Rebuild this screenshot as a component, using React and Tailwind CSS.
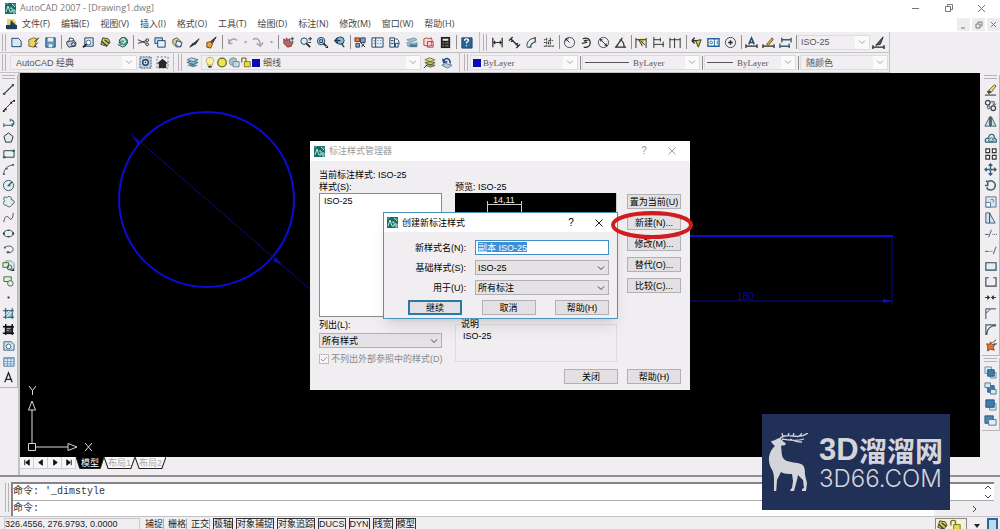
import React, { useState } from "react";

const BLACK = "#2a2a2a";
const TEAL = "#35606e";
const NAVY = "#1d3f63";

// all toolbar glyphs share a 14x14 grid
const icons = {
  new: <path d="M2 2.5h7l3 3v6H2z" fill="#d5e9f5" stroke={NAVY} />,
  open: (
    <>
      <path d="M2 4l5-2 4 1-3 9-6-1z" fill="#e8d36a" stroke="#77682a" />
      <path d="M8 6l5-4M12 7l-4 4 3 1" stroke={BLACK} />
    </>
  ),
  save: (
    <>
      <path d="M2 2h10v10H2z" fill="#5d9bbf" stroke={NAVY} />
      <path d="M4 2h6v4H4zM5 9h4v3H5z" fill="#e4eef5" />
    </>
  ),
  plot: (
    <>
      <path d="M4 6l1-4 4 1v3" fill="#fff" stroke={NAVY} />
      <path d="M2 6l8-1 2 3-1 3-7 1-2-3z" fill="#c6c9d4" stroke="#33334e" />
      <circle cx="9" cy="9" r="2" stroke={NAVY} />
    </>
  ),
  preview: (
    <>
      <path d="M3 2h9v9H3z" fill="#dbe9f4" stroke={NAVY} />
      <circle cx="7" cy="7" r="2.5" fill="#fff" stroke="#45688a" />
      <path d="M5 9l-4 3" stroke={BLACK} strokeWidth="2" />
    </>
  ),
  publish: (
    <>
      <path d="M4 2l6 1 2 4-4 4-6-2z" fill="#e2cf55" stroke="#4b4320" />
      <path d="M3 6l6 5M6 4l5 4" stroke={NAVY} strokeWidth="1.5" />
    </>
  ),
  globe: (
    <>
      <circle cx="8" cy="6" r="4.5" fill="#4d9c92" stroke={NAVY} />
      <path d="M5 5l3-2 2 3-3 2M1 9l7 2 3-1" stroke="#d7ebc0" strokeWidth="1.5" />
      <path d="M2 9l5 3 4-2" stroke={NAVY} />
    </>
  ),
  cut: (
    <>
      <path d="M1 4l9 4M1 8l9-3" stroke={BLACK} />
      <circle cx="11" cy="4.500" r="1.500" stroke={BLACK} />
      <circle cx="11" cy="9" r="1.500" stroke={BLACK} />
    </>
  ),
  copy: (
    <>
      <path d="M1 2h8v6H1z" fill="#bfdcec" stroke={NAVY} />
      <path d="M4 5h8v7H4z" fill="#e2f0f8" stroke={NAVY} />
    </>
  ),
  paste: (
    <>
      <path d="M2 4l4-2 4 3 1 6-5 1-4-4z" fill="#d6d69c" stroke="#5b5b3a" />
      <path d="M6 5l6 2-2 5-5-2z" fill="#e8f1f4" stroke={NAVY} />
    </>
  ),
  brush: <path d="M2 12l3-4 2 1zM6 8l6-5-4 6z" fill={BLACK} stroke={BLACK} />,
  match: (
    <>
      <path d="M6 6l6-5-4 7z" fill="#b6322a" stroke={BLACK} />
      <path d="M2 7l4-1 2 3-2 4-4-1z" fill="#e2a648" stroke="#6b3b20" />
    </>
  ),
  undo: <path d="M3 8c1-5 7-6 9-3M3 3v5h4" stroke="#a5a3a8" strokeWidth="1.500" />,
  redo: <path d="M2 4c4-3 8 0 8 6M6 8l4 3 3-4" stroke="#a5a3a8" strokeWidth="1.500" />,
  pan: (
    <>
      <path d="M2 3l2 2 1-3 1 3 2-2 1 4 3-1-2 5-4 1-4-4z" fill="#b46a60" stroke="#7b3c3c" />
      <path d="M11 1v4M9 3h4" stroke={NAVY} />
    </>
  ),
  zoomRt: (
    <>
      <circle cx="5.500" cy="5.500" r="3.500" fill="#dcecf4" stroke={NAVY} />
      <path d="M8 8l4 4" stroke={BLACK} strokeWidth="2" />
      <path d="M10 3h4M12 1v4M10 7h3" stroke={BLACK} />
    </>
  ),
  zoomWin: (
    <>
      <circle cx="5.500" cy="5.500" r="4" fill="#b7d5e4" stroke={NAVY} />
      <path d="M4 4h3v3H4z" stroke={NAVY} />
      <path d="M8 8l3 3" stroke={BLACK} strokeWidth="2" />
      <path d="M13 10v3h-3z" fill={BLACK} />
    </>
  ),
  zoomPrev: (
    <>
      <circle cx="8" cy="5" r="4" fill="#8fb9d0" stroke={NAVY} />
      <path d="M2 5h6M5 2L2 5l3 3M9 8l3 4" stroke={NAVY} strokeWidth="1.500" />
    </>
  ),
  props: (
    <>
      <path d="M1 2h5v4H1z" fill="#d8873b" stroke="#7f3030" />
      <path d="M7 2h5v5H7zM2 8h4v4H2z" fill="#8b9bc9" stroke="#38406c" />
      <path d="M7 7l5 5M8 12l3-4" stroke={BLACK} />
    </>
  ),
  center: (
    <>
      <path d="M1 2h12v10H1z" fill="#eaf1f6" stroke={NAVY} />
      <path d="M5 2v10M3 5h1M7 5h1M10 5h1M3 8h1M7 8h1M10 8h1" stroke={NAVY} />
    </>
  ),
  palettes: (
    <>
      <path d="M2 2h5v10H2z" fill="#e4edf5" stroke={NAVY} />
      <path d="M3 5h3M3 8h3M8 3c3 0 4 2 4 6M8 8h3v4H8z" stroke={NAVY} />
    </>
  ),
  sheet: (
    <>
      <path d="M2 4l8-2 3 2-7 3zM2 7l7 1 4-1v4H3z" fill="#9bc1cf" stroke="#7b9bb0" />
      <path d="M5 9h8v3H5z" fill="#4f7791" />
    </>
  ),
  markup: (
    <>
      <path d="M2 3l3-1 2 1 3-1 1 3-1 3 1 2-4 1-5-1z" fill="#f6d8d8" stroke="#c0393f" />
      <path d="M6 6h6v6H6z" stroke="#b33" />
    </>
  ),
  calc: (
    <>
      <path d="M2 1h10v12H2z" fill="#222" />
      <path d="M4 3h6v2H4zM4 7h1v1H4zM7 7h1v1H7zM9 7h1v1H9zM4 10h1v1H4zM7 10h1v1H7zM9 10h1v1H9z" fill="#f0e9e6" />
    </>
  ),
  help: (
    <>
      <path d="M2 2h11v11H2z" fill="#2b6595" stroke={NAVY} />
      <path d="M5 5c0-3 5-2 4 0-1 1-2 1-2 3M7 10v1" stroke="#fff" strokeWidth="1.500" />
    </>
  ),
  dimLinear: <path d="M2 2v10M12 2v10M2 7h10M4 5v4M10 5v4" stroke={BLACK} strokeWidth="1.300" />,
  dimAligned: <path d="M1 5l4-4M9 13l4-4M3 3l8 8M3 6l3-1M8 9l3-1" stroke={BLACK} strokeWidth="1.400" />,
  dimArc: (
    <>
      <path d="M2 11c0-5 3-8 9-9" stroke={BLACK} />
      <path d="M6 12c0-3 2-5 6-6M2 12h5M11 1v6" stroke={TEAL} strokeWidth="1.500" />
    </>
  ),
  dimOrd: <path d="M5 2v9M2 11h11M7 9V5h5M9 2v9M2 4h2M2 7h2" stroke={BLACK} strokeDasharray="3 1" />,
  dimRadius: (
    <>
      <circle cx="7" cy="7" r="5.500" stroke="#444" />
      <path d="M7 7L3 3M3 3v3M3 3h3" stroke={BLACK} />
    </>
  ),
  dimJog: <path d="M3 3c4-2 8 0 8 4s-3 6-7 5M2 8l5-1-2-2 5-1" stroke={BLACK} strokeWidth="1.300" />,
  dimDia: (
    <>
      <circle cx="7" cy="7" r="5.500" stroke="#444" />
      <path d="M3 3l8 8M4 6V4h2M10 8v2H8" stroke={BLACK} />
    </>
  ),
  dimAngle: <path d="M1 12h12M2 12l7-10M6 4c4 1 5 4 5 8" stroke={BLACK} strokeWidth="1.300" />,
  quickDim: (
    <>
      <path d="M3 3h8l-3 8z" fill="#d8cf3f" />
      <path d="M1 2v11M12 2v11M1 4h11M4 4l4 7M6 5l5 5" stroke={BLACK} />
    </>
  ),
  baseline: <path d="M2 1v12M2 4h7M2 9h11M9 2v4M12 6v6" stroke={BLACK} />,
  continueDim: <path d="M1 2v11M6 2v11M12 2v11M1 4h11" stroke={BLACK} />,
  leader: (
    <>
      <path d="M2 5h6M2 5l3-3M2 5l3 3" stroke={BLACK} strokeWidth="1.500" />
      <path d="M6 5l6-1-3 8z" fill="#d2c92f" stroke={BLACK} />
    </>
  ),
  tolerance: (
    <>
      <path d="M1 3h12v8H1z" fill="#fff" stroke="#27639b" strokeWidth="1.500" />
      <path d="M8 3v8M11 5v4" stroke="#27639b" />
      <circle cx="4.500" cy="7" r="1.500" stroke="#27639b" />
    </>
  ),
  centerMark: (
    <>
      <circle cx="7" cy="7" r="5.500" stroke="#444" />
      <path d="M7 4.500v5M4.500 7h5" stroke={BLACK} strokeWidth="1.500" />
    </>
  ),
  dimEdit: (
    <>
      <path d="M1 9v4M13 9v4M1 11h12" stroke={BLACK} strokeWidth="1.300" />
      <path d="M4 9l3-7 3 7M5 7h4" stroke="#1f4d6e" strokeWidth="1.600" />
    </>
  ),
  dimTedit: (
    <>
      <path d="M1 9v4M13 9v4M1 11h12" stroke={BLACK} strokeWidth="1.300" />
      <path d="M5 9l6-7 1 2-5 6z" fill="#dfb83a" stroke="#6f5417" />
    </>
  ),
  dimUpdate: <path d="M3 2v5M13 2v5M3 4h10M1 8v5M11 8v5M1 11h10" stroke={TEAL} strokeWidth="1.500" />,
  dimStyle: (
    <>
      <path d="M1 10v4M13 10v4M1 12h12" stroke={BLACK} strokeWidth="1.500" />
      <path d="M4 10l8-9-3 8z" fill="#4c5c5c" stroke={BLACK} />
    </>
  ),
  gear: (
    <>
      <path d="M1 1h12v12H1z" fill="#bfd3df" stroke="#3e5568" strokeDasharray="2 1" />
      <circle cx="7" cy="7" r="3" fill="#fff" stroke={NAVY} strokeWidth="1.500" />
      <circle cx="7" cy="7" r="1" fill={NAVY} />
    </>
  ),
  home: (
    <>
      <path d="M1 1h12v12H1z" stroke="#666" strokeDasharray="2 2" />
      <path d="M1 8l6-5 6 5h-2v5H3V8z" fill="#2a2a2a" />
    </>
  ),
  layers: (
    <>
      <path d="M1 10l5-2 7 2-5 2z" fill="#5b8ba5" />
      <path d="M1 7l5-2 7 2-5 2z" fill="#8fb8ca" stroke="#3a6580" />
      <path d="M1 4l5-2 7 2-5 2z" fill="#c5dde7" stroke="#4c7890" />
    </>
  ),
  bulb: (
    <>
      <path d="M4 8c-3-3-1-7 3-7s6 4 3 7v2H4z" fill="#f8f2a0" stroke="#a8a24c" />
      <path d="M5 12h4" stroke="#333" strokeWidth="2" />
    </>
  ),
  sun: <circle cx="7" cy="7" r="5" fill="#efe44c" stroke="#6f6b25" strokeWidth="1.500" />,
  freeze: (
    <>
      <circle cx="6" cy="6" r="4.500" fill="#a9c4cf" stroke="#6f8a95" />
      <path d="M6 6h7v6H6z" fill="#c9dde6" stroke="#60808f" />
    </>
  ),
  lock: (
    <>
      <path d="M5 6h7v6H5z" fill="#e6dc4a" stroke="#77701f" />
      <path d="M2 7V3c0-2 5-2 5 0v3" stroke="#77701f" strokeWidth="1.500" />
    </>
  ),
  layerMake: (
    <>
      <path d="M2 4l5-2 6 2-5 2z" fill="#d9dd9a" stroke="#74783b" />
      <path d="M2 7l5-1 6 1-5 3zM3 10l4-1 6 1-5 2z" fill="#b9c06c" stroke="#585c2e" />
      <path d="M1 13l3-3" stroke={BLACK} />
    </>
  ),
  layerPrev: (
    <>
      <path d="M2 10l4-2 7 2-5 3z" fill="#b9cfdb" stroke="#5a7d93" />
      <path d="M4 6c2-5 7-4 7 2M3 3l1 4 4-1" stroke="#1d4b8c" strokeWidth="1.700" />
    </>
  ),
  line: (
    <>
      <path d="M2.500 11.500l9-9" stroke="#333" strokeWidth="1.300" />
      <path d="M1 10.500h2.500V13H1zM10.500 1H13v2.500h-2.500z" fill={TEAL} />
    </>
  ),
  xline: (
    <>
      <path d="M1 13L13 1" stroke="#333" />
      <path d="M3 10h2v2H3zM9 3h2v2H9zM1 12h2v2H1zM12 1h2v2h-2z" fill="#222" />
    </>
  ),
  pline: <path d="M2 11h9M2 9v4M5 11h6c3-1 2-5-1-6M11 9v4M9 4v3" stroke={TEAL} strokeWidth="1.200" />,
  polygon: <path d="M7 2l5 4-2 6H4L2 6z" fill="#dcecf0" stroke={BLACK} />,
  rect: (
    <>
      <path d="M2 4h11v7H2z" fill="#e9f1f5" stroke="#333" />
      <path d="M1 10h3v2H1zM11 3h3v2h-3z" fill={TEAL} />
    </>
  ),
  arc: (
    <>
      <path d="M2 12c0-6 4-9 10-10" stroke="#555" />
      <path d="M1 11h2v2H1zM4 5h2v2H4zM11 1h2v2h-2z" fill={TEAL} />
    </>
  ),
  circle: (
    <>
      <circle cx="7" cy="7" r="5.500" fill="#e0eff3" stroke="#3b4d55" />
      <path d="M7 7l4-4M6 7h3" stroke={TEAL} strokeWidth="1.500" />
    </>
  ),
  cloud: (
    <path d="M5 3c2-3 6-1 5 2 4 0 4 5 1 5-1 4-6 3-6 1-4 1-4-4-2-5-3-3 0-5 2-3z" fill="#deedf0" stroke="#455" />
  ),
  spline: <path d="M2 12c1-9 5-6 6-4s4 1 4-6" stroke="#444" />,
  ellipse: (
    <>
      <ellipse cx="7" cy="7" rx="5" ry="3.500" fill="#e3f1f4" stroke="#456" />
      <path d="M1 6h2v2H1zM11 6h2v2h-2zM6 3h2v1H6zM6 10h2v1H6z" fill={BLACK} />
    </>
  ),
  ellipseArc: (
    <>
      <path d="M3 5c3-3 9-2 9 2 0 3-4 4-6 3" stroke="#456" />
      <path d="M2 4h2v2H2zM5 9h3v2H5z" fill={TEAL} />
    </>
  ),
  insert: (
    <>
      <path d="M4 2h6l3 3v6H6z" fill="#dae5ee" stroke="#8196a4" />
      <path d="M1 4h6v5H1zM8 12h5" fill="#dff0d4" stroke="#3d6a36" />
      <circle cx="8" cy="9" r="2.500" stroke="#3d6a36" />
      <path d="M13 10v3h-3z" fill={BLACK} />
    </>
  ),
  block: (
    <>
      <path d="M2 2h8v5H2z" fill="#dff0d4" stroke="#3d6a36" />
      <circle cx="9" cy="9" r="3" fill="#dfeee4" stroke="#3d6a36" />
    </>
  ),
  point: <path d="M6 6h2v2H6z" fill={BLACK} />,
  hatch: (
    <>
      <path d="M3 3h9v9H3z" fill="#9cc9da" />
      <path d="M1 4h12M1 11h12M4 1v12M11 1v12" stroke="#28495d" />
      <path d="M4 8l4-4M5 11l6-6" stroke="#fff" />
    </>
  ),
  gradient: (
    <>
      <path d="M3 3h9v9H3z" fill="#3b4650" />
      <path d="M1 4h12M1 11h12M4 1v12M11 1v12" stroke="#111" strokeWidth="1.500" />
      <path d="M5 6h4M5 8h2" stroke="#a9b7c2" />
    </>
  ),
  region: (
    <>
      <path d="M2 3h8l3 3v6H2z" fill="#cfe3ee" stroke="#3b6580" />
      <circle cx="7" cy="8" r="2.500" fill="#fff" stroke="#3b6580" />
    </>
  ),
  table: (
    <>
      <path d="M2 3h11v9H2z" fill="#e8f2f9" stroke="#3f6f9d" />
      <path d="M2 4h11M2 7h11M2 9.500h11M6 4v8M9.500 4v8" stroke="#6e9cc4" />
    </>
  ),
  mtext: <path d="M3 12l4-10 4 10M4.500 9h5" stroke="#222" strokeWidth="1.400" />,
  erase: (
    <>
      <path d="M5 8l6-6 2 1-5 7z" fill="#e8d98a" stroke="#6e6130" />
      <path d="M3 9l3-1 2 2-3 2z" fill="#444" />
      <path d="M1 13h12" stroke="#222" />
    </>
  ),
  copyObj: (
    <>
      <circle cx="4" cy="4" r="2.500" stroke="#345" strokeWidth="1.300" />
      <circle cx="5" cy="9" r="1.500" stroke="#345" />
      <circle cx="10" cy="10" r="2.500" stroke="#345" strokeWidth="1.300" />
      <path d="M7 3h4v3M9 5l2 2 2-2" stroke="#345" />
    </>
  ),
  mirror: (
    <>
      <path d="M6 2v10H1zM8 2v10h5z" fill="#c8dfe4" stroke="#456" />
      <path d="M7 1v12" stroke="#456" />
    </>
  ),
  offset: (
    <>
      <path d="M2 12c-2-3 1-5 3-4 0-6 7-6 6 0 2 0 3 2 2 4z" fill="#d6e9ec" stroke={TEAL} strokeWidth="1.300" />
      <path d="M5 11c-1-2 2-2 2-3s3-1 2 1c2 0 2 2 1 2z" stroke={TEAL} />
    </>
  ),
  array: <path d="M2 2h4v4H2zM9 2h4v4H9zM2 9h4v4H2zM9 9h4v4H9z" fill="#fff" stroke="#333" strokeWidth="1.200" />,
  move: <path d="M7 1v12M1 7h12M5 3l2-2 2 2M5 11l2 2 2-2M3 5L1 7l2 2M11 5l2 2-2 2" stroke="#3b6276" strokeWidth="1.500" />,
  rotate: <path d="M4 3c4-3 9 1 8 5-1 5-8 5-9 1M2 2l2 1v4H1" stroke="#3b6276" strokeWidth="1.700" />,
  scale: (
    <>
      <path d="M2 2h11v11H2z" fill="#d8e5f2" stroke="#59758f" />
      <path d="M2 8h5v5H2zM7 5h3v3" fill="#f6f9fc" stroke="#59758f" />
    </>
  ),
  stretch: <path d="M2 2h4v11H2zM6 2l6 11H6z" fill="#d4e5f0" stroke="#3c5a70" />,
  trim: <path d="M1 8h4M5 11l3-8M9 8h1M11 8h1M13 8h1" stroke="#456" />,
  extend: <path d="M1 9h4M6 9h1M8 9h1M10 12l3-8" stroke="#456" />,
  breakAt: <path d="M2 4h11v8H2z" fill="#e4edf3" stroke="#345" strokeWidth="1.200" />,
  breakObj: <path d="M5 3H2v9h11V3h-3" fill="none" stroke="#345" strokeWidth="1.200" />,
  join: <path d="M1 7h5M8 7h5M4 5l2 2-2 2zM10 5L8 7l2 2z" fill="#333" stroke="#333" />,
  chamfer: <path d="M2 13V7l5-5h6M2 7V2h5" stroke="#345" />,
  fillet: <path d="M3 13C3 6 7 3 13 3M2 13V2h11" stroke={TEAL} strokeWidth="1.200" />,
  explode: (
    <>
      <path d="M3 5l3 1 1-3 2 3 3-1-2 4 1 3-4-1-3 2v-4z" fill="#d9773a" stroke="#8c3f24" />
      <path d="M9 4l4-3M11 6l3-1" stroke="#444" />
    </>
  ),
  front: (
    <>
      <path d="M1 1h7v7H1zM7 7h6v6H7z" fill="#d7e7f2" stroke="#6d8da6" />
      <path d="M4 4h7v7H4z" fill="#3f7cae" stroke="#24557e" />
    </>
  ),
  back: (
    <>
      <path d="M4 4h7v7H4z" fill="#3f7cae" stroke="#24557e" />
      <path d="M1 1h6v5H1zM7 8h6v5H7z" fill="#d7e7f2" stroke="#4f738e" />
    </>
  ),
  above: (
    <>
      <path d="M6 6h7v7H6z" fill="#d7e7f2" stroke="#6d8da6" />
      <path d="M2 2h9v8H2z" fill="#3f7cae" stroke="#24557e" />
    </>
  ),
  under: (
    <>
      <path d="M1 2h9v8H1z" fill="#4f86a9" stroke="#24557e" />
      <path d="M5 6h8v6H5z" fill="#e1f0f6" stroke="#4f738e" />
    </>
  ),
};

const drawTools = [
  "line", "xline", "pline", "polygon", "rect", "arc", "circle", "cloud", "spline", "ellipse",
  "ellipseArc", "insert", "block", "point", "hatch", "gradient", "region", "table", "mtext",
];
const modifyTools = [
  "erase", "copyObj", "mirror", "offset", "array", "move", "rotate", "scale", "stretch",
  "trim", "extend", "breakAt", "breakObj", "join", "chamfer", "fillet", "explode",
];
const orderTools = ["front", "back", "above", "under"];

const menus = [
  "文件(F)", "编辑(E)", "视图(V)", "插入(I)", "格式(O)", "工具(T)",
  "绘图(D)", "标注(N)", "修改(M)", "窗口(W)", "帮助(H)",
];

function Icon({ name }) {
  return (
    <svg viewBox="0 0 14 14" className="h-[13px] w-[13px]" fill="none">
      {icons[name]}
    </svg>
  );
}

function Tool({ name }) {
  return (
    <button type="button" aria-label={name} className="flex h-4 w-[17px] shrink-0 items-center justify-center">
      <Icon name={name} />
    </button>
  );
}

function Tools({ names }) {
  return (
    <div className="flex shrink-0">
      {names.map((n) => (
        <Tool key={n} name={n} />
      ))}
    </div>
  );
}

function Sep() {
  return (
    <div className="flex w-1 shrink-0 justify-center">
      <div className="h-[14px] w-px bg-[#8f8d90]" />
    </div>
  );
}

function Grip() {
  return (
    <div className="mr-px flex h-[17px] w-[7px] shrink-0 gap-[2px] pl-[2px]">
      <div className="w-px bg-[#b5b3b6]" />
      <div className="w-px bg-[#b5b3b6]" />
    </div>
  );
}

function Chevron({ className }) {
  return (
    <svg viewBox="0 0 8 5" className={"pointer-events-none absolute h-[5px] w-2 " + className} fill="none">
      <path d="M1 .5l3 3 3-3" stroke="currentColor" />
    </svg>
  );
}

function BarSelect({ label, value, className, textClass = "pl-1", children }) {
  return (
    <div className={"relative flex h-[15px] shrink-0 items-center border border-[#dddbde] bg-[#f1eff2] " + className}>
      {children}
      <select aria-label={label} className={"h-full min-w-0 flex-1 appearance-none text-[9px] leading-3 text-[#555] outline-none " + textClass}>
        <option>{value}</option>
      </select>
      <div className="pointer-events-none absolute right-0 top-0 h-full w-[14px] bg-[#fbfafb]" />
      <Chevron className="right-[3px] top-1 text-[#a5a3a8]" />
    </div>
  );
}

function AppIcon() {
  return (
    <svg viewBox="0 0 11 11" className="h-[11px] w-[11px] shrink-0" fill="none">
      <path d="M0 0h11v11H0z" fill="#176e66" />
      <path d="M1 9l2-6 2 6M5 5h2v4H5M8 9V7h2v3H8M7 1l3 3" stroke="#bfe5df" />
      <path d="M0 2l3-2M8 2h3" stroke="#5fb3a8" />
    </svg>
  );
}

function DialogButton({ children, className = "" }) {
  return (
    <button
      type="button"
      className={"h-[15px] shrink-0 whitespace-nowrap border bg-[#e2e0e2] text-[9px] leading-3 text-black " + (className || "w-[54px] border-[#b2b0b3]")}
    >
      {children}
    </button>
  );
}

function DialogSelect({ id, value, className = "" }) {
  return (
    <div className={"relative h-[15px] border border-[#b2b0b3] bg-[#e4e2e4] " + className}>
      <select id={id} className="block h-full w-full appearance-none pl-[2px] text-[9px] leading-3 text-black outline-none">
        <option>{value}</option>
      </select>
      <Chevron className="right-[3px] top-[5px] text-[#444]" />
    </div>
  );
}

function Toolbars() {
  return (
    <div className="flex h-[41px] shrink-0 flex-col overflow-hidden bg-[#f0eef1]">
      <div className="flex h-[21px] w-[890px] items-center border-b border-r border-[#c3c1c4]">
        <Grip />
        <Tools names={["new", "open", "save"]} />
        <Sep />
        <Tools names={["plot", "preview", "publish", "globe"]} />
        <Sep />
        <Tools names={["cut", "copy", "paste", "brush", "match"]} />
        <Sep />
        <Tool name="undo" />
        <span className="w-2 text-center text-[6px] text-[#aaa]">▾</span>
        <Tool name="redo" />
        <span className="w-[10px] text-center text-[6px] text-[#aaa]">▾</span>
        <Sep />
        <Tools names={["pan", "zoomRt", "zoomWin", "zoomPrev"]} />
        <Sep />
        <Tools names={["props", "center", "palettes", "sheet", "markup", "calc"]} />
        <Sep />
        <Tool name="help" />
        <div className="ml-1 mr-px h-full w-px bg-[#c3c1c4]" />
        <Grip />
        <Tools names={["dimLinear", "dimAligned", "dimArc", "dimOrd"]} />
        <Sep />
        <Tools names={["dimRadius", "dimJog", "dimDia", "dimAngle"]} />
        <Sep />
        <Tools names={["quickDim", "baseline", "continueDim"]} />
        <Sep />
        <Tools names={["leader", "tolerance", "centerMark"]} />
        <Sep />
        <Tools names={["dimEdit", "dimTedit", "dimUpdate"]} />
        <Sep />
        <BarSelect label="标注样式" value="ISO-25" className="w-[72px]" textClass="pl-[2px]" />
        <Tool name="dimStyle" />
      </div>
      <div className="flex h-5 w-[890px] items-center border-b border-r border-[#c3c1c4]">
        <Grip />
        <BarSelect label="工作空间" value="AutoCAD 经典" className="ml-[2px] w-[127px]" textClass="pl-[5px]" />
        <Tools names={["gear", "home"]} />
        <div className="ml-[2px] mr-[2px] h-full w-px bg-[#c3c1c4]" />
        <Grip />
        <Tool name="layers" />
        <BarSelect label="图层" value="细线" className="w-[220px]" textClass="pl-[3px]">
          <div className="ml-[2px] flex">
            {["bulb", "sun", "freeze", "lock"].map((n) => (
              <span key={n} className="flex w-3">
                <Icon name={n} />
              </span>
            ))}
          </div>
          <span className="h-2 w-2 shrink-0 bg-[#0a0ab4]" />
        </BarSelect>
        <Tools names={["layerMake", "layerPrev"]} />
        <div className="ml-1 mr-[2px] h-full w-px bg-[#c3c1c4]" />
        <Grip />
        <BarSelect label="颜色" value="ByLayer" className="w-[108px]" textClass="pl-[2px] font-['Liberation_Serif']">
          <span className="ml-[2px] h-2 w-2 shrink-0 bg-[#0a0ab4]" />
        </BarSelect>
        <Sep />
        <BarSelect label="线型" value="ByLayer" className="w-[118px]" textClass="pl-1 font-['Liberation_Serif']">
          <span className="ml-[2px] h-px w-11 shrink-0 bg-[#555]" />
        </BarSelect>
        <Sep />
        <BarSelect label="线宽" value="ByLayer" className="w-[92px]" textClass="pl-1 font-['Liberation_Serif']">
          <span className="ml-[2px] h-px w-[26px] shrink-0 bg-[#555]" />
        </BarSelect>
        <Sep />
        <BarSelect label="打印样式" value="随颜色" className="w-[88px]" textClass="pl-[5px]" />
      </div>
    </div>
  );
}

function SideBar({ groups }) {
  return (
    <div className="flex w-[18px] shrink-0 flex-col items-center pt-[2px]">
      {groups.map((g) => (
        <div key={g[0]} className="mb-[2px] w-full border-b border-r border-[#b9b7ba] pb-[2px]">
          <div className="mx-[2px] mb-[2px] h-[4px] border-y border-[#b5b3b6]" />
          {g.map((n) => (
            <button key={n} type="button" aria-label={n} className="flex h-4 w-full items-center justify-center">
              <Icon name={n} />
            </button>
          ))}
        </div>
      ))}
    </div>
  );
}

function Drawing() {
  return (
    <svg className="absolute inset-0 h-full w-full" fill="none">
      <g transform="translate(-20 -73)">
        <circle cx="206.5" cy="199.500" r="87.500" stroke="#0c0cd6" strokeWidth="2" />
        <path d="M130 133l190 165" stroke="#0a0a86" />
        <path d="M132 136l9 6-3 3zM282 265l-9-4 3-4z" fill="#0c0ca8" />
        <path d="M690 236h203" stroke="#0c0cd6" strokeWidth="2" />
        <path d="M892 237v68M690 301h202" stroke="#0a0a9a" />
        <path d="M892 301l-9-2v4z" fill="#0c0cc0" />
        <text x="737" y="300" fill="#0a0a9a" fontSize="10" fontFamily="Liberation Sans, sans-serif">180</text>
        <g stroke="#d8d8d8">
          <path d="M28.500 443.500h7v7h-7zM32 443v-33M36 447h32" />
          <path d="M28.500 410l3.500-9 3.500 9zM68 443.500l9 3.500-9 3.500z" />
          <path d="M29 386l3.500 4.500 3.500-4.500M32.500 390v5M85 443l7 8M92 443l-7 8" />
        </g>
      </g>
    </svg>
  );
}

function NewStyleDialog() {
  const [name, setName] = useState("副本 ISO-25");
  return (
    <div role="dialog" aria-label="创建新标注样式" className="absolute left-[363px] top-[139px] w-[235px] border border-[#4a94bd] bg-[#f0eef1] pb-[3px] text-[9px] leading-3 text-black shadow-lg">
      <div className="flex h-[19px] items-center bg-white pl-[3px]">
        <AppIcon />
        <span className="ml-1 flex-1">创建新标注样式</span>
        <button type="button" aria-label="帮助" className="w-4 text-[10px]">?</button>
        <button type="button" aria-label="关闭" className="ml-4 mr-3 w-[10px]">
          <svg viewBox="0 0 8 8" className="h-2 w-2" stroke="#222"><path d="M.5.500l7 7M7.500.500l-7 7" /></svg>
        </button>
      </div>
      <form className="flex flex-col gap-[5px] pl-4 pr-2 pt-2" onSubmit={(e) => e.preventDefault()}>
        <div className="flex items-center justify-between">
          <label htmlFor="style-name" className="w-[66px] text-right">新样式名(N):</label>
          <div className="relative w-[134px]">
            <input
              id="style-name"
              value={name}
              onChange={(e) => setName(e.target.value)}
              className="block h-[15px] w-full border border-[#3d8fc4] bg-white bg-[linear-gradient(#3d90d8,#3d90d8)] bg-[length:49px_10px] bg-[position:2px_1px] bg-no-repeat pl-[2px] text-white outline-none"
            />
          </div>
        </div>
        <div className="flex items-center justify-between">
          <label htmlFor="base-style" className="w-[66px] text-right">基础样式(S):</label>
          <DialogSelect id="base-style" value="ISO-25" className="w-[134px]" />
        </div>
        <div className="flex items-center justify-between">
          <label htmlFor="used-for" className="w-[66px] text-right">用于(U):</label>
          <DialogSelect id="used-for" value="所有标注" className="w-[134px]" />
        </div>
        <div className="flex justify-between pl-2">
          <DialogButton className="w-[54px] border-[#2b78a8] outline outline-[#2b78a8] -outline-offset-2">继续</DialogButton>
          <DialogButton>取消</DialogButton>
          <DialogButton>帮助(H)</DialogButton>
        </div>
      </form>
    </div>
  );
}

function StyleManager() {
  return (
    <div role="dialog" aria-label="标注样式管理器" className="absolute left-[290px] top-[68px] w-[380px] bg-[#f0eef1] pb-[6px] text-[9px] leading-3 text-black">
      <div className="flex h-[20px] items-center bg-white pl-1 text-[#999]">
        <AppIcon />
        <span className="ml-1 flex-1">标注样式管理器</span>
        <button type="button" aria-label="帮助" className="w-4 text-[10px]">?</button>
        <button type="button" aria-label="关闭" className="ml-4 mr-3 w-[10px]">
          <svg viewBox="0 0 8 8" className="h-2 w-2" stroke="#999"><path d="M.5.500l7 7M7.500.500l-7 7" /></svg>
        </button>
      </div>
      <div className="px-[9px] pt-2">
        <p>当前标注样式: ISO-25</p>
        <div className="flex">
          <div className="w-[123px]">
            <div>样式(S):</div>
            <ul className="h-[124px] border border-[#8c8a8e] bg-white pl-1 pt-[1px]">
              <li>ISO-25</li>
            </ul>
            <label htmlFor="list-filter" className="mb-[2px] mt-[2px] block">列出(L):</label>
            <DialogSelect id="list-filter" value="所有样式" />
            <div className="mt-[5px] flex items-center gap-[2px] whitespace-nowrap text-[#8a888c]">
              <span className="relative flex">
                <input id="skip-xref" type="checkbox" defaultChecked disabled className="peer h-[10px] w-[10px] appearance-none border border-[#bbb] bg-[#f4f3f5]" />
                <svg viewBox="0 0 10 10" className="pointer-events-none absolute inset-0 hidden h-[10px] w-[10px] peer-checked:block" fill="none">
                  <path d="M2 5l2 2 4-4" stroke="#999" />
                </svg>
              </span>
              <label htmlFor="skip-xref">不列出外部参照中的样式(D)</label>
            </div>
          </div>
          <div className="ml-[13px] w-[162px]">
            <div>预览: ISO-25</div>
            <div className="h-[124px] border-b border-r border-[#ccc] bg-black">
              <svg className="h-full w-full" fill="none">
                <text x="38" y="10" fill="#eee" fontSize="9" fontFamily="Liberation Sans, sans-serif">14,11</text>
                <path d="M32.500 8v20M66.500 8v20M32 11.500h34" stroke="#ccc" />
              </svg>
            </div>
            <fieldset className="mt-px h-[44px] border border-[#dddbde] pl-[7px]">
              <legend className="-ml-[2px]">说明</legend>
              <p>ISO-25</p>
            </fieldset>
          </div>
          <div className="ml-[10px] mt-[13px] flex flex-col gap-[6px]">
            <DialogButton>置为当前(U)</DialogButton>
            <DialogButton>新建(N)...</DialogButton>
            <DialogButton>修改(M)...</DialogButton>
            <DialogButton>替代(O)...</DialogButton>
            <DialogButton>比较(C)...</DialogButton>
          </div>
        </div>
        <div className="mt-1 flex justify-end gap-[9px]">
          <DialogButton>关闭</DialogButton>
          <DialogButton>帮助(H)</DialogButton>
        </div>
      </div>
    </div>
  );
}

function LayoutTabs() {
  const nav = ["M3 2v6M8 2L4 5l4 3z", "M7 2L3 5l4 3z", "M4 2l4 3-4 3z", "M8 2v6M3 2l4 3-4 3z"];
  return (
    <div className="flex h-[18px] shrink-0 bg-[#f0eef1] text-[9px] leading-3">
      {nav.map((d) => (
        <button key={d} type="button" aria-label="布局" className="flex h-3 w-[14px] items-center justify-center border-b border-r border-[#cfcdd0] bg-[#f6f5f7]">
          <svg viewBox="0 0 11 10" className="h-[9px] w-[10px]"><path d={d} fill="#111" stroke="#111" /></svg>
        </button>
      ))}
      {["模型", "布局1", "布局2"].map((t, i) => (
        <button key={t} type="button" className={"relative h-3 " + (i === 0 ? "w-[28px] text-white" : "w-[31px] text-[#aaa]")}>
          <svg viewBox="0 0 30 12" preserveAspectRatio="none" className="absolute inset-0 h-full w-full">
            <path d="M0 0l4 11.500h22L30 0" fill={i === 0 ? "#000" : "#f8f7f9"} stroke="#222" />
          </svg>
          <span className="relative">{t}</span>
        </button>
      ))}
    </div>
  );
}

function CommandLine() {
  return (
    <div className="flex h-[41px] shrink-0 border-t-2 border-[#918f93] bg-[#f0eef1] pr-[6px] pt-[5px] font-['Liberation_Mono','Noto_Sans_CJK_SC',monospace] text-[10px] text-[#333]">
      <div className="ml-[5px] mr-[2px] mt-px h-[29px] w-[4px] border-x border-[#b5b3b6]" />
      <div className="flex flex-1 flex-col border-l-2 border-t-2 border-[#858388]">
        <div className="flex h-[16px] items-center bg-white leading-3">
          <span className="flex-1 whitespace-pre">命令: '_dimstyle</span>
          <svg viewBox="0 0 8 16" className="mr-[2px] h-4 w-2" fill="none" stroke="#444"><path d="M1 5l3-3 3 3M1 11l3 3 3-3" /></svg>
        </div>
        <div className="flex h-4 items-center border-t border-[#aaa8ac] bg-white">
          <label htmlFor="command" className="leading-3">命令:</label>
          <input id="command" className="min-w-0 flex-1 pl-1 outline-none" />
          <div className="flex h-full w-[60px] items-center justify-end bg-[#f0eef1] pr-4">
            <svg viewBox="0 0 6 8" className="h-2 w-[6px]" fill="none" stroke="#444"><path d="M1 1l3 3-3 3" /></svg>
          </div>
        </div>
      </div>
    </div>
  );
}

function StatusBar() {
  const modes = [
    ["捕捉", false], ["栅格", false], ["正交", false], ["极轴", true], ["对象捕捉", true],
    ["对象追踪", true], ["DUCS", true], ["DYN", true], ["线宽", true], ["模型", true],
  ];
  return (
    <div className="flex h-[13px] shrink-0 overflow-hidden border-t border-[#c3c1c4] bg-[#f0eef1] text-[9px] leading-[10px] text-[#222]">
      <div className="ml-1 mt-px w-[136px] border border-b-0 border-[#c9c7ca]">326.4556, 276.9793, 0.0000</div>
      <div className="ml-1 mt-px flex gap-[3px]">
        {modes.map(([label, on]) => (
          <button
            key={label}
            type="button"
            className={on ? "border border-b-0 border-[#333]" : "border border-b-0 border-transparent border-r-[#aaa]"}
          >
            {label}
          </button>
        ))}
      </div>
      <div className="ml-auto mr-[2px] mt-px flex items-start">
        <div className="flex w-8 border border-[#888] bg-[#f3f1d8]">
          <Icon name="publish" />
          <Icon name="lock" />
        </div>
        <svg viewBox="0 0 20 11" className="h-[11px] w-5"><path d="M7 6h6l-3 4z" fill="#222" /></svg>
        <div className="h-4 w-[11px] border-2 border-[#31658d] bg-[#b8dcf0]" />
      </div>
    </div>
  );
}

function Watermark() {
  return (
    <div className="absolute bottom-[19px] right-[50px] flex h-24 w-[188px] items-center bg-[#213056] text-[#d3d5da]">
      <svg viewBox="0 0 44 58" className="ml-[6px] h-[58px] w-11 shrink-0" fill="none">
        <path
          d="M3 8c3 0 5-2 8-3l3 2c1 2 3 2 4 4-1 2-4 1-5 2 1 6 0 11 4 14 5 3 12 2 16 4 4 2 4 6 4 11l2 8-1 8h-4v-2l2-1-1-8-5-5-1 5-3 11h-4l1-2 1-1 1-7-1-7c-4 0-8 0-11-2l-4 8-1 14H4l2-4 0-10c0-6-1-9-3-12-4-8-2-17 4-22-1-1-3-2-4-5z"
          fill="#d3d5da"
        />
        <path d="M12 6c1-3 7-4 13-3 6 1 11 0 15-3M14 6c6 1 14 3 22 0M15 4l-1-4M20 3l1-3M25 3l1-3M22 6c5 3 9 3 12 3M29 4c3-1 4-2 5-4" stroke="#d3d5da" strokeWidth="1.300" />
      </svg>
      <div className="ml-[7px]">
        <div className="flex items-end whitespace-nowrap text-[28px] font-bold leading-[34px]">
          <span className="w-10 text-[31px]">3D</span>
          <span className="font-['Noto_Sans_CJK_SC',sans-serif]">溜溜网</span>
        </div>
        <div className="font-['Inter',sans-serif] text-[24px] font-light leading-6">3D66.COM</div>
      </div>
    </div>
  );
}

export default function App() {
  return (
    <div className="relative flex h-screen min-h-[480px] flex-col overflow-hidden bg-[#f0eef1] font-['Liberation_Sans','Noto_Sans_CJK_SC',sans-serif]">
      {/* Title */}
      <header className="flex h-4 shrink-0 items-center bg-white pl-[5px] font-['Open_Sans','Noto_Sans_CJK_SC',sans-serif] text-[9px] text-[#777]">
        <AppIcon />
        <h1 className="ml-1 flex-1">AutoCAD 2007 - [Drawing1.dwg]</h1>
        <svg viewBox="0 0 74 9" className="mr-[14px] h-[9px] w-[74px]" fill="none" stroke="#777">
          <path d="M0 4.500h7M33.500 2.500h5v5h-5zM35.500 2V.500h5v5H39M66 1l7 7M73 1l-7 7" />
        </svg>
      </header>

      {/* Menu */}
      <nav className="flex h-4 shrink-0 items-center bg-white font-['Open_Sans','Noto_Sans_CJK_SC',sans-serif] text-[9px] text-[#444]">
        <svg viewBox="0 0 11 12" className="ml-[6px] h-3 w-[11px]">
          <path d="M1 1h7l2 3v8H1z" fill="#edd46b" />
          <path d="M0 7h11v4H0z" fill="#1f3d5c" />
          <path d="M5 2l5 5H4z" fill="#26476a" />
        </svg>
        <div className="ml-[5px] flex flex-1 gap-[11px]">
          {menus.map((m) => (
            <button key={m} type="button">{m}</button>
          ))}
        </div>
        <div className="flex gap-[2px]">
          {["M2 8h4", "M2 4h4v4H2zM4 3V2h4v4H7", "M2 2l5 5M7 2L2 7"].map((d) => (
            <button key={d} type="button" aria-label="窗口" className="flex h-[13px] w-[13px] items-center justify-center bg-[#eeecef]">
              <svg viewBox="0 0 9 9" className="h-[9px] w-[9px]" fill="none" stroke="#777"><path d={d} /></svg>
            </button>
          ))}
        </div>
      </nav>

      <Toolbars />

      {/* Workspace */}
      <div className="flex min-h-0 flex-1">
        <SideBar groups={[drawTools]} />
        <main className="flex min-w-0 flex-1 flex-col border-l-2 border-[#c3c1c4]">
          <div className="relative min-h-0 flex-1 bg-black">
            <Drawing />
            <StyleManager />
            <NewStyleDialog />
            <svg viewBox="0 0 84 30" className="pointer-events-none absolute left-[590px] top-[137px] h-[30px] w-[84px]" fill="none">
              <ellipse cx="42" cy="15" rx="39" ry="12" stroke="#d01d1f" strokeWidth="4" />
            </svg>
          </div>
          <LayoutTabs />
        </main>
        <div className="ml-[2px] flex">
          <SideBar groups={[modifyTools, orderTools]} />
        </div>
      </div>

      <CommandLine />
      <StatusBar />
      <Watermark />
    </div>
  );
}
